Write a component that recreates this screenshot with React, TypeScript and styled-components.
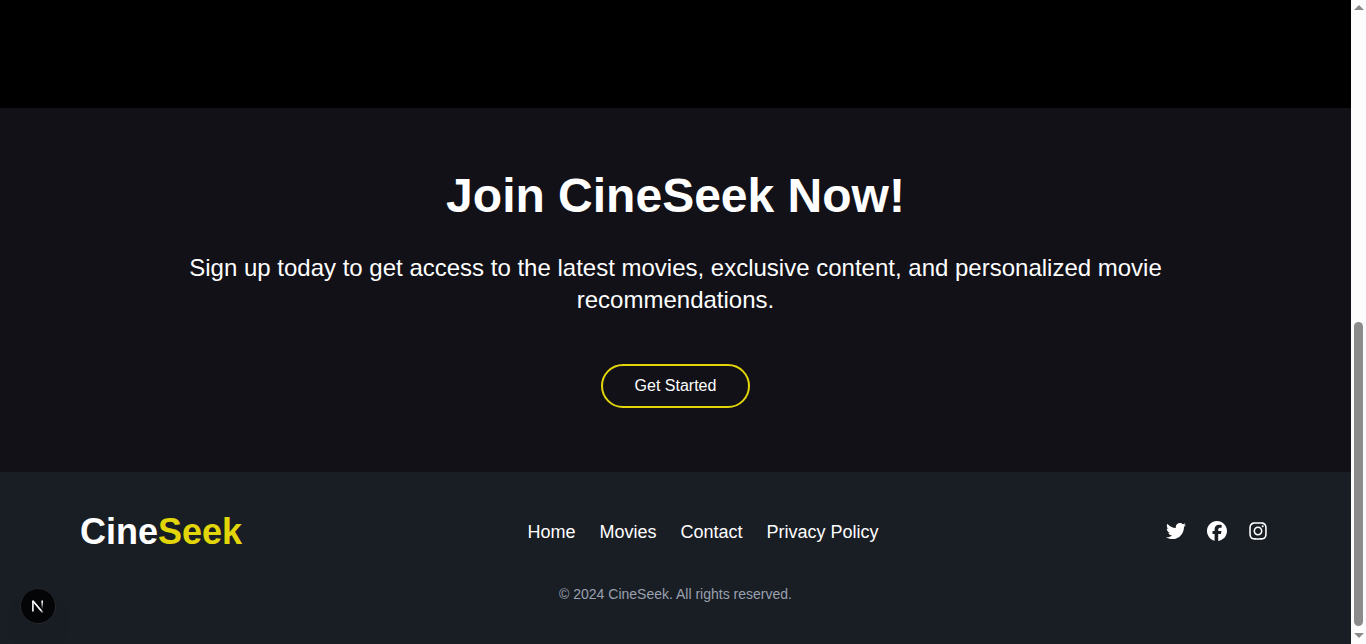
import React from "react";
import styled, { createGlobalStyle } from "styled-components";
import { FaFacebook, FaInstagram, FaTwitter } from "react-icons/fa6";

const GlobalStyle = createGlobalStyle`
  *, *::before, *::after { box-sizing: border-box; }
  body {
    margin: 0;
    background: #000;
    color: #fff;
    font-family: "Liberation Sans", Arial, sans-serif;
  }
  h2, p, ul { margin: 0; padding: 0; }
  a { color: inherit; text-decoration: none; }
`;

const Window = styled.div`
  display: grid;
  grid-template-columns: minmax(0, 1fr) 15px;
  min-height: 100vh;
`;

const Page = styled.div`
  display: flex;
  flex-direction: column;
`;

const Backdrop = styled.div`
  flex: 1;
  min-height: 108px;
  background: #000;
`;

const JoinSection = styled.section`
  display: flex;
  flex-direction: column;
  align-items: center;
  padding: 64px 16px;
  background: #121118;
  text-align: center;
`;

const Heading = styled.h2`
  margin-bottom: 32px;
  font-size: 48px;
  font-weight: 700;
  line-height: 48px;
`;

const Lead = styled.p`
  max-width: 1024px;
  margin-bottom: 48px;
  font-size: 24px;
  line-height: 32px;
`;

const StartButton = styled.button`
  padding: 8px 32px;
  border: 2px solid #e2d609;
  border-radius: 22px;
  background: transparent;
  color: #fff;
  font-family: inherit;
  font-size: 16px;
  line-height: 24px;
  cursor: pointer;
`;

const Footer = styled.footer`
  padding: 40px 80px;
  background: #191d24;
`;

const FooterRow = styled.div`
  display: flex;
  align-items: center;
  justify-content: space-between;
  margin-bottom: 32px;
`;

const Logo = styled.a`
  font-size: 36px;
  font-weight: 700;
  line-height: 40px;
`;

const Accent = styled.span`
  color: #e2d609;
`;

const LinkList = styled.ul<{ $gap: number }>`
  display: flex;
  gap: ${({ $gap }) => $gap}px;
  list-style: none;
  font-size: 18px;
  line-height: 28px;
`;

const SocialLink = styled.a`
  display: flex;
  justify-content: center;
  width: 25px;
  padding-bottom: 2px;
`;

const Copyright = styled.p`
  color: #99a1af;
  font-size: 14px;
  line-height: 20px;
  text-align: center;
`;

const DevBadge = styled.button`
  position: fixed;
  left: 20px;
  bottom: 20px;
  display: grid;
  place-items: center;
  width: 36px;
  height: 36px;
  padding: 0;
  border: 1px solid #25282c;
  border-radius: 50%;
  background: #040506;
  box-shadow: 0 16px 32px -8px rgba(0, 0, 0, 0.12);
`;

const ScrollRail = styled.div`
  position: sticky;
  top: 0;
  display: flex;
  flex-direction: column;
  align-items: center;
  height: 100vh;
  padding: 5px 0;
  background: #fcfcfc;
`;

const Arrow = styled.svg`
  display: block;
  flex: none;
  width: 10px;
  height: 6px;
  fill: #8b8b8b;
`;

const Track = styled.div`
  display: flex;
  flex: 1;
  flex-direction: column;
  justify-content: flex-end;
  margin: 7px 0;
`;

const Thumb = styled.div`
  width: 9px;
  height: 50%;
  border-radius: 5px;
  background: #8b8b8b;
`;

const navLinks = ["Home", "Movies", "Contact", "Privacy Policy"];

const socials = [
  { name: "Twitter", Icon: FaTwitter },
  { name: "Facebook", Icon: FaFacebook },
  { name: "Instagram", Icon: FaInstagram },
];

function NextMark() {
  return (
    <svg width="14" height="14" viewBox="0 0 14 14" fill="none" aria-hidden="true">
      <defs>
        <linearGradient id="stem" x1="0" y1="1" x2="0" y2="10" gradientUnits="userSpaceOnUse">
          <stop offset="0.2" stopColor="#fff" />
          <stop offset="1" stopColor="#fff" stopOpacity="0" />
        </linearGradient>
        <linearGradient id="diagonal" x1="7" y1="7" x2="13" y2="14" gradientUnits="userSpaceOnUse">
          <stop offset="0.5" stopColor="#fff" />
          <stop offset="1" stopColor="#fff" stopOpacity="0.1" />
        </linearGradient>
      </defs>
      <path d="M2 2L11.8 13.6" stroke="url(#diagonal)" strokeWidth="1.7" />
      <path d="M1.9 12.6V1.4" stroke="#fff" strokeWidth="1.6" />
      <path d="M11.2 1.4V10" stroke="url(#stem)" strokeWidth="1.6" />
    </svg>
  );
}

export default function App() {
  return (
    <>
      <GlobalStyle />
      <Window>
        <Page>
          <Backdrop />
          <JoinSection>
            <Heading>Join CineSeek Now!</Heading>
            <Lead>
              Sign up today to get access to the latest movies, exclusive
              content, and personalized movie recommendations.
            </Lead>
            <StartButton type="button">Get Started</StartButton>
          </JoinSection>
          <Footer>
            <FooterRow>
              <Logo href="#">
                Cine<Accent>Seek</Accent>
              </Logo>
              <nav aria-label="Footer">
                <LinkList $gap={24}>
                  {navLinks.map((label) => (
                    <li key={label}>
                      <a href="#">{label}</a>
                    </li>
                  ))}
                </LinkList>
              </nav>
              <LinkList $gap={16}>
                {socials.map(({ name, Icon }) => (
                  <li key={name}>
                    <SocialLink href="#" aria-label={name}>
                      <Icon size={20} />
                    </SocialLink>
                  </li>
                ))}
              </LinkList>
            </FooterRow>
            <Copyright>© 2024 CineSeek. All rights reserved.</Copyright>
          </Footer>
        </Page>
        <ScrollRail aria-hidden="true">
          <Arrow viewBox="0 0 10 6">
            <path d="M5 0L10 5H0Z" />
          </Arrow>
          <Track>
            <Thumb />
          </Track>
          <Arrow viewBox="0 0 10 6">
            <path d="M0 0H10L5 5Z" />
          </Arrow>
        </ScrollRail>
      </Window>
      <DevBadge type="button" aria-label="Open Next.js Dev Tools">
        <NextMark />
      </DevBadge>
    </>
  );
}
